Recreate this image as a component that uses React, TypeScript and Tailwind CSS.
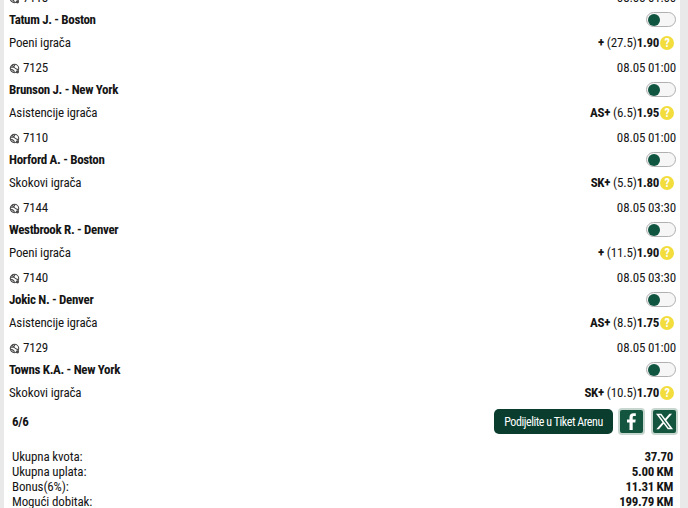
const rows = [
  { id: '7118', date: '08.05 01:00', player: 'Tatum J. - Boston', market: 'Poeni igrača', tag: '+', line: '(27.5)', odd: '1.90' },
  { id: '7125', date: '08.05 01:00', player: 'Brunson J. - New York', market: 'Asistencije igrača', tag: 'AS+', line: '(6.5)', odd: '1.95' },
  { id: '7110', date: '08.05 01:00', player: 'Horford A. - Boston', market: 'Skokovi igrača', tag: 'SK+', line: '(5.5)', odd: '1.80' },
  { id: '7144', date: '08.05 03:30', player: 'Westbrook R. - Denver', market: 'Poeni igrača', tag: '+', line: '(11.5)', odd: '1.90' },
  { id: '7140', date: '08.05 03:30', player: 'Jokic N. - Denver', market: 'Asistencije igrača', tag: 'AS+', line: '(8.5)', odd: '1.75' },
  { id: '7129', date: '08.05 01:00', player: 'Towns K.A. - New York', market: 'Skokovi igrača', tag: 'SK+', line: '(10.5)', odd: '1.70' },
];

const totals = [
  { label: 'Ukupna kvota:', value: '37.70' },
  { label: 'Ukupna uplata:', value: '5.00 KM' },
  { label: 'Bonus(6%):', value: '11.31 KM' },
  { label: 'Mogući dobitak:', value: '199.79 KM' },
];

function BallIcon() {
  return (
    <svg width="11" height="11" viewBox="0 0 12 12" fill="none" stroke="#4a4a4a" strokeWidth="1.2">
      <circle cx="6" cy="6" r="4.6" />
      <path d="M1.8 4.5 C4 5 6 3.5 6.5 1.4 M3.5 2.2 C5 4.5 7 7 10.500 7.200 M1.600 7 C3.500 7 5.500 8 6 10.500" />
      <circle cx="9.200" cy="9.600" r="1.800" fill="#4a4a4a" stroke="none" />
    </svg>
  );
}

function Help() {
  return (
    <div className="ml-[1px] mr-[2px] flex h-[14px] w-[14px] items-center justify-center rounded-full bg-[#f2dd3c] text-[12px] font-bold leading-none text-white">
      ?
    </div>
  );
}

function Toggle() {
  return (
    <div className="-mt-[1px] flex h-[15px] w-[30px] items-center rounded-full border border-[#b0b0b0] bg-[#f6f6f6] pl-[1px]">
      <div className="h-[12px] w-[12px] rounded-full bg-[#0f5540]" />
    </div>
  );
}

function Row({ row }: { row: (typeof rows)[number] }) {
  return (
    <div className="flex flex-col">
      <div className="flex h-[24px] items-center justify-between pt-[2px]">
        <div className="flex items-center gap-[3px]">
          <BallIcon />
          <span>{row.id}</span>
        </div>
        <span>{row.date}</span>
      </div>
      <div className="flex h-[22px] items-center justify-between">
        <span className="font-bold tracking-[-0.33px]">{row.player}</span>
        <Toggle />
      </div>
      <div className="flex h-[24px] items-center justify-between">
        <span>{row.market}</span>
        <div className="flex items-center">
          <span className="mr-[3px] font-bold tracking-[-0.33px]">{row.tag}</span>
          <span>{row.line}</span>
          <span className="font-bold tracking-[-0.33px]">{row.odd}</span>
          <Help />
        </div>
      </div>
    </div>
  );
}

export default function App() {
  return (
    <div className="h-[508px] overflow-hidden bg-[#e9e9e9] pl-[4px] pr-[8px] font-['Roboto',sans-serif] text-[13px] tracking-[-0.15px] text-[#151515] [font-stretch:75%]">
      <div className="-mt-[15px] h-[540px] bg-white pl-[5px] pr-[4px]">
        {rows.map((row) => (
          <Row key={row.id} row={row} />
        ))}
        <div className="mt-[3px] -mr-[2px] flex items-center justify-between pl-[3px]">
          <span className="font-bold tracking-[-0.33px]">6/6</span>
          <div className="flex items-center gap-[6px]">
            <div className="-mr-[1px] flex h-[25px] w-[119px] items-center justify-center rounded-[5px] bg-[#0b3d2e] text-[12px] tracking-[-0.45px] text-white">Podijelite u Tiket Arenu</div>
            <div className="flex h-[27px] w-[27px] items-center justify-center rounded-[4px] border-2 border-[#c8d6d0] bg-[#14553f]">
              <svg width="9" height="17" viewBox="0 0 9 17" fill="white">
                <path d="M2.500 17V9.500H0V6.500h2.500V4.300C2.500 1.600 4 0.200 6.400 0.200c1.100 0 2.100.1 2.400.1v2.700H7.200c-1.300 0-1.500.6-1.500 1.500v2h3l-.4 3H5.700V17z" />
              </svg>
            </div>
            <div className="flex h-[27px] w-[27px] items-center justify-center rounded-[4px] border-2 border-[#c8d6d0] bg-[#14553f]">
              <svg width="19" height="19" viewBox="0 0 24 24" fill="white">
                <path d="M18.244 2.250h3.308l-7.227 8.260 8.502 11.240H16.170l-5.214-6.817L4.990 21.750H1.680l7.730-8.835L1.254 2.250H8.080l4.713 6.231zm-1.161 17.520h1.833L7.084 4.126H5.117z" />
              </svg>
            </div>
          </div>
        </div>
        <div className="mt-[14px] flex flex-col pl-[3px] pr-[3px] leading-[15px]">
          {totals.map((t) => (
            <div key={t.label} className="flex justify-between">
              <span>{t.label}</span>
              <span className="font-bold tracking-[-0.33px]">{t.value}</span>
            </div>
          ))}
        </div>
      </div>
    </div>
  );
}
